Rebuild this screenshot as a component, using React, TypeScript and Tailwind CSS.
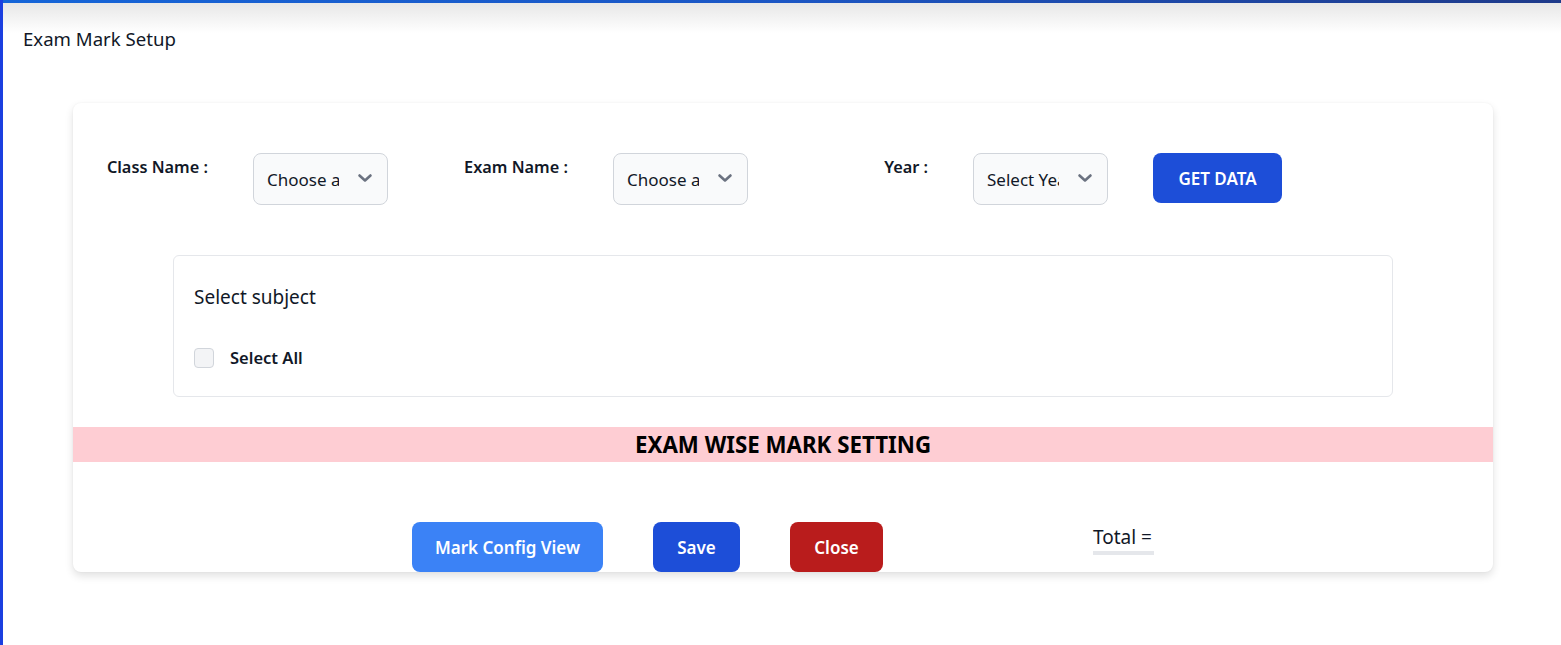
import React from "react";

const FONT = { fontFamily: '"Segoe UI", "Noto Sans", "Open Sans", sans-serif' };

function Chevron() {
  return (
    <svg width="20" height="20" viewBox="0 0 20 20" fill="none" className="shrink-0">
      <path d="M4.5 7.5l5.5 5 5.5-5" stroke="#6b7280" strokeWidth="2.6" strokeLinecap="round" strokeLinejoin="round" />
    </svg>
  );
}

function FakeSelect({ text }: { text: string }) {
  return (
    <div className="flex h-[52px] w-[135px] shrink-0 items-center rounded-lg border border-[#d1d5db] bg-[#f9fafb] pl-[13px] pr-[12px]">
      <div className="w-[72px] overflow-hidden whitespace-nowrap pt-[2px] text-[17px] text-[#111827]">{text}</div>
      <div className="ml-auto -mt-[3px]">
        <Chevron />
      </div>
    </div>
  );
}

function Group({ label, text }: { label: string; text: string }) {
  return (
    <div className="flex items-start">
      <div className="w-[101px] whitespace-nowrap pt-[2px] text-right text-[16.3px] font-semibold text-[#111827]" dir="rtl">
        <span dir="ltr">{label}</span>
      </div>
      <div className="ml-[45px]">
        <FakeSelect text={text} />
      </div>
    </div>
  );
}

export default function App() {
  return (
    <div className="flex h-[645px] w-full overflow-hidden bg-white" style={FONT}>
      <div className="w-[3px] shrink-0 bg-[#1b3fe0]" />
      <div className="flex flex-1 flex-col">
        <div className="h-[3px] bg-gradient-to-r from-[#1565d8] via-[#1b56c4] to-[#1e3a8a]" />
        <div className="flex-1 bg-[linear-gradient(to_bottom,#e7e7e7,#ffffff_30px)]">
          <div className="pl-[20px] pt-[22px] text-[18.6px] leading-[28px] text-[#111827]">Exam Mark Setup</div>
          <div className="ml-[70px] mt-[50px] w-[1420px] rounded-lg bg-white shadow-[0_4px_8px_rgba(0,0,0,0.12),0_0_2px_rgba(0,0,0,0.05)]">
            <div className="flex items-start pl-[34px] pt-[50px]">
              <Group label="Class Name :" text="Choose a class" />
              <div className="ml-[79px]">
                <Group label="Exam Name :" text="Choose a exam" />
              </div>
              <div className="ml-[79px]">
                <Group label="Year :" text="Select Year" />
              </div>
              <button className="ml-[45px] h-[50px] w-[129px] rounded-lg bg-[#1d4ed8] pt-[2px] text-[17px] font-semibold text-white">
                GET DATA
              </button>
            </div>

            <div className="ml-[100px] mt-[50px] h-[142px] w-[1220px] rounded-md border border-[#e5e7eb] px-[20px] pt-[27px]">
              <div className="text-[19px] leading-[28px] text-[#111827]">Select subject</div>
              <div className="mt-[33px] flex items-center">
                <div className="h-[20px] w-[20px] rounded-[4px] border border-[#d1d5db] bg-[#f3f4f6]" />
                <span className="ml-[16px] text-[16.5px] font-semibold leading-[28px] text-[#111827]">Select All</span>
              </div>
            </div>

            <div className="mt-[30px] flex h-[35px] items-center justify-center bg-[#fecdd3] pt-[1px] text-[22.3px] font-bold text-black">
              EXAM WISE MARK SETTING
            </div>

            <div className="mt-[60px] flex items-start justify-center">
              <button className="h-[50px] w-[191px] rounded-lg bg-[#3b82f6] pt-[2px] text-[17px] font-semibold text-white">
                Mark Config View
              </button>
              <button className="ml-[50px] h-[50px] w-[87px] rounded-lg bg-[#1d4ed8] pt-[2px] text-[17px] font-semibold text-white">
                Save
              </button>
              <button className="ml-[50px] h-[50px] w-[93px] rounded-lg bg-[#b91c1c] pt-[2px] text-[17px] font-semibold text-white">
                Close
              </button>
              <div className="ml-[210px] mt-[2px] w-[61px] whitespace-nowrap border-b-4 border-[#e5e7eb] text-[19px] leading-[27px] text-[#111827]">
                Total =
              </div>
            </div>
          </div>
        </div>
      </div>
    </div>
  );
}
